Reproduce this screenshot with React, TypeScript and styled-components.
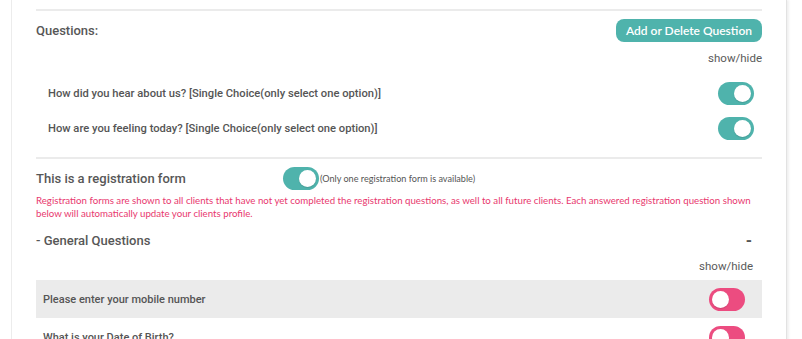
import React from 'react';
import styled, { createGlobalStyle } from 'styled-components';

const GlobalStyle = createGlobalStyle`
  html, body {
    margin: 0;
    padding: 0;
    background: #ffffff;
    overflow: hidden;
  }
  body {
    font-family: Roboto, "Liberation Sans", sans-serif;
    color: #555555;
  }
`;

const Page = styled.div`
  height: 339px;
  overflow: hidden;
  padding-left: 11px;
`;

const Card = styled.div`
  width: 776px;
  min-height: 400px;
  box-sizing: border-box;
  padding: 9px 24px 0 24px;
  border-left: 1px solid #ececec;
  border-right: 1px solid #e2e2e2;
  box-shadow: 2px 0 2px rgba(0, 0, 0, 0.06);
`;

const Divider = styled.div`
  height: 2px;
  background: #ebebeb;
`;

const HeaderRow = styled.div`
  display: flex;
  justify-content: space-between;
  align-items: center;
  margin-top: 8px;
`;

const SectionTitle = styled.div<{ $width?: number }>`
  font-size: 13px;
  font-weight: 500;
  color: #575757;
  ${(p) => (p.$width ? `width: ${p.$width}px; flex-shrink: 0;` : '')}
`;

const AddButton = styled.button`
  height: 23px;
  padding: 0 10px;
  border: none;
  border-radius: 8px;
  background: #4fb3ac;
  color: #ffffff;
  font-family: Lato, "Open Sans", sans-serif;
  font-size: 12px;
  font-weight: 600;
  cursor: pointer;
`;

const ShowHide = styled.div<{ $right?: number; $top?: number }>`
  text-align: right;
  font-size: 11.5px;
  line-height: 16px;
  color: #5a5a5a;
  margin-top: ${(p) => p.$top ?? 8}px;
  padding-right: ${(p) => p.$right ?? 0}px;
`;

const QuestionRow = styled.div`
  display: flex;
  align-items: center;
  justify-content: space-between;
  height: 35px;
  padding: 0 8px 0 12px;
  font-size: 11.2px;
  font-weight: 500;
  color: #555555;
`;

const ToggleTrack = styled.span<{ $on: boolean }>`
  position: relative;
  display: inline-block;
  width: 36px;
  height: 23px;
  border-radius: 12px;
  flex-shrink: 0;
  background: ${(p) => (p.$on ? '#4fb3ac' : '#ec4c80')};
`;

const ToggleKnob = styled.span<{ $on: boolean }>`
  position: absolute;
  top: 3px;
  left: ${(p) => (p.$on ? '16px' : '3px')};
  width: 17px;
  height: 17px;
  border-radius: 50%;
  background: #ffffff;
  box-shadow: 0 1px 1px rgba(0, 0, 0, 0.12);
`;

const Toggle = ({ on }: { on: boolean }) => (
  <ToggleTrack $on={on}>
    <ToggleKnob $on={on} />
  </ToggleTrack>
);

const QuestionsList = styled.div`
  margin-top: 10px;
  margin-bottom: 11px;
`;

const RegistrationRow = styled.div`
  display: flex;
  align-items: center;
  padding-top: 8px;
`;

const Note = styled.span`
  font-family: Lato, "Open Sans", sans-serif;
  font-size: 9.1px;
  color: #555555;
  margin-left: 1px;
`;

const Warning = styled.p`
  margin: 4px 0 0 0;
  font-family: Lato, "Open Sans", sans-serif;
  font-size: 9.7px;
  line-height: 13px;
  color: #e8386e;
`;

const GroupHeader = styled.div`
  display: flex;
  justify-content: space-between;
  align-items: center;
  height: 24px;
  margin-top: 8px;
  padding-right: 10px;
`;

const Collapse = styled.span`
  font-size: 16px;
  font-weight: 700;
  color: #555555;
`;

const GroupList = styled.div`
  margin-top: 6px;
`;

const GroupRow = styled.div<{ $shaded?: boolean }>`
  display: flex;
  align-items: center;
  justify-content: space-between;
  height: 38px;
  padding: 0 17px 0 7px;
  background: ${(p) => (p.$shaded ? '#ebebeb' : 'transparent')};
  font-size: 11px;
  font-weight: 500;
  color: #555555;
`;

const questions = [
  'How did you hear about us? [Single Choice(only select one option)]',
  'How are you feeling today? [Single Choice(only select one option)]',
];

const generalQuestions = ['Please enter your mobile number', 'What is your Date of Birth?'];

export default function App() {
  return (
    <Page>
      <GlobalStyle />
      <Card>
        <Divider />
        <HeaderRow>
          <SectionTitle>Questions:</SectionTitle>
          <AddButton>Add or Delete Question</AddButton>
        </HeaderRow>
        <ShowHide>show/hide</ShowHide>
        <QuestionsList>
          {questions.map((q) => (
            <QuestionRow key={q}>
              <span>{q}</span>
              <Toggle on />
            </QuestionRow>
          ))}
        </QuestionsList>
        <Divider />
        <RegistrationRow>
          <SectionTitle $width={247}>This is a registration form</SectionTitle>
          <Toggle on />
          <Note>(Only one registration form is available)</Note>
        </RegistrationRow>
        <Warning>
          Registration forms are shown to all clients that have not yet completed the registration questions, as well
          to all future clients. Each answered registration question shown below will automatically update your clients
          profile.
        </Warning>
        <GroupHeader>
          <SectionTitle>- General Questions</SectionTitle>
          <Collapse>-</Collapse>
        </GroupHeader>
        <ShowHide $right={9} $top={6}>show/hide</ShowHide>
        <GroupList>
          {generalQuestions.map((q, i) => (
            <GroupRow key={q} $shaded={i === 0}>
              <span>{q}</span>
              <Toggle on={false} />
            </GroupRow>
          ))}
        </GroupList>
      </Card>
    </Page>
  );
}
